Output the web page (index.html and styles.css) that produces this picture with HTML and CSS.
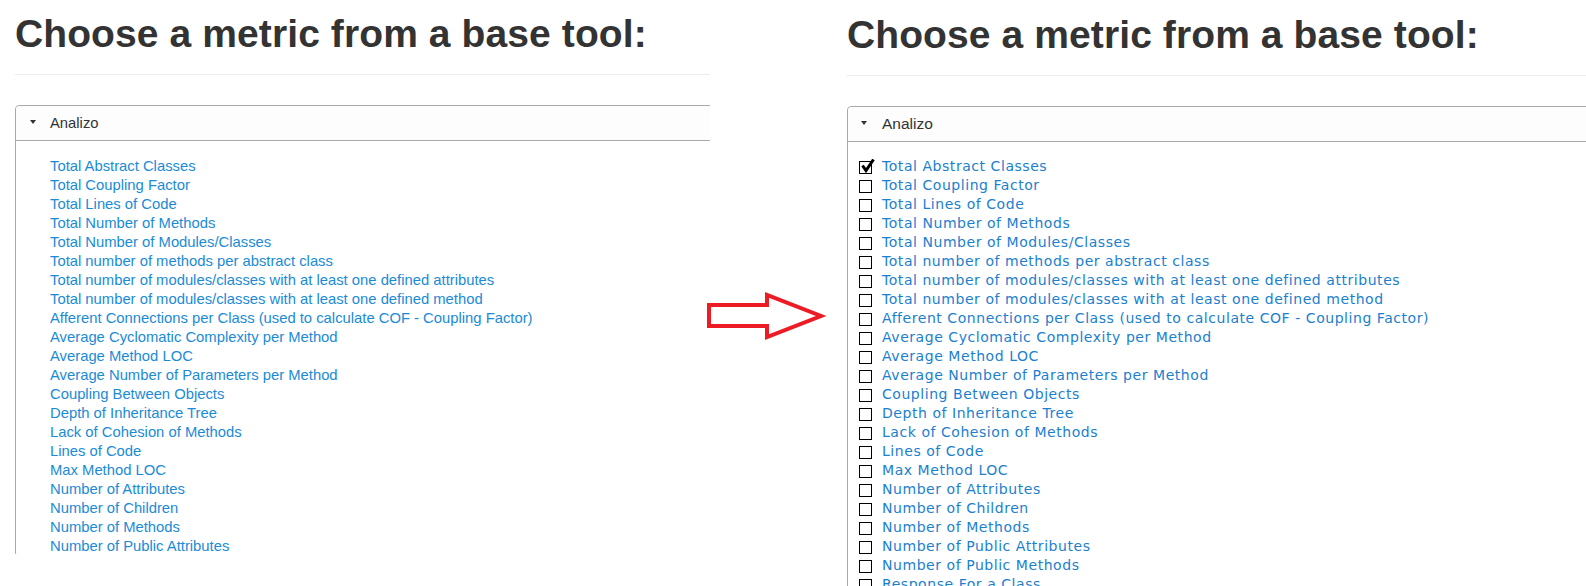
FILE: index.html
```html
<!DOCTYPE html>
<html>
<head>
<meta charset="utf-8">
<link rel="stylesheet" href="styles.css">
</head>
<body>
<div class="page">
  <section class="shot shot-left">
    <div class="page-header"><h1>Choose a metric from a base tool:</h1></div>
    <div class="panel">
      <div class="panel-heading"><span class="caret"></span><span>Analizo</span></div>
      <ul class="metrics">
        <li>Total Abstract Classes</li>
        <li>Total Coupling Factor</li>
        <li>Total Lines of Code</li>
        <li>Total Number of Methods</li>
        <li>Total Number of Modules/Classes</li>
        <li>Total number of methods per abstract class</li>
        <li>Total number of modules/classes with at least one defined attributes</li>
        <li>Total number of modules/classes with at least one defined method</li>
        <li>Afferent Connections per Class (used to calculate COF - Coupling Factor)</li>
        <li>Average Cyclomatic Complexity per Method</li>
        <li>Average Method LOC</li>
        <li>Average Number of Parameters per Method</li>
        <li>Coupling Between Objects</li>
        <li>Depth of Inheritance Tree</li>
        <li>Lack of Cohesion of Methods</li>
        <li>Lines of Code</li>
        <li>Max Method LOC</li>
        <li>Number of Attributes</li>
        <li>Number of Children</li>
        <li>Number of Methods</li>
        <li>Number of Public Attributes</li>
      </ul>
    </div>
  </section>
  <div class="arrow-col">
    <svg class="arrow" width="126" height="60" viewBox="0 0 126 60">
      <polygon points="3,19 61,19 61,9 115,30 61,51 61,40 3,40" fill="none" stroke="#ed1c24" stroke-width="4" stroke-linejoin="miter"/>
    </svg>
  </div>
  <section class="shot shot-right">
    <div class="page-header"><h1>Choose a metric from a base tool:</h1></div>
    <div class="panel">
      <div class="panel-heading"><span class="caret"></span><span>Analizo</span></div>
      <ul class="metrics">
        <li><span class="box checked"><svg width="15" height="15" viewBox="0 0 15 15"><path d="M2.5 6.5 L6 11.5 L13.5 0.5" fill="none" stroke="#000" stroke-width="3"/></svg></span>Total Abstract Classes</li>
        <li><span class="box"></span>Total Coupling Factor</li>
        <li><span class="box"></span>Total Lines of Code</li>
        <li><span class="box"></span>Total Number of Methods</li>
        <li><span class="box"></span>Total Number of Modules/Classes</li>
        <li><span class="box"></span>Total number of methods per abstract class</li>
        <li><span class="box"></span>Total number of modules/classes with at least one defined attributes</li>
        <li><span class="box"></span>Total number of modules/classes with at least one defined method</li>
        <li><span class="box"></span>Afferent Connections per Class (used to calculate COF - Coupling Factor)</li>
        <li><span class="box"></span>Average Cyclomatic Complexity per Method</li>
        <li><span class="box"></span>Average Method LOC</li>
        <li><span class="box"></span>Average Number of Parameters per Method</li>
        <li><span class="box"></span>Coupling Between Objects</li>
        <li><span class="box"></span>Depth of Inheritance Tree</li>
        <li><span class="box"></span>Lack of Cohesion of Methods</li>
        <li><span class="box"></span>Lines of Code</li>
        <li><span class="box"></span>Max Method LOC</li>
        <li><span class="box"></span>Number of Attributes</li>
        <li><span class="box"></span>Number of Children</li>
        <li><span class="box"></span>Number of Methods</li>
        <li><span class="box"></span>Number of Public Attributes</li>
        <li><span class="box"></span>Number of Public Methods</li>
        <li><span class="box"></span>Response For a Class</li>
      </ul>
    </div>
  </section>
</div>
</body>
</html>
```
FILE: styles.css
```css
html, body {
  margin: 0;
  padding: 0;
  background: #fff;
}
body {
  width: 1586px;
  height: 586px;
  overflow: hidden;
  font-family: "Liberation Sans", Arial, sans-serif;
  color: #333;
}
.page {
  display: flex;
  height: 586px;
}
.shot {
  overflow: hidden;
  box-sizing: border-box;
  padding-left: 15px;
  padding-top: 14px;
}
.shot-left {
  flex: 0 0 710px;
  height: 554px;
}
.shot-right {
  flex: 1 1 auto;
  height: 586px;
  padding-top: 15px;
}
.page-header {
  width: 1100px;
  border-bottom: 1px solid #eee;
  padding-bottom: 21px;
  margin-bottom: 30px;
}
h1 {
  margin: 0;
  font-size: 39px;
  line-height: 39px;
  font-weight: bold;
  letter-spacing: 0.1px;
  color: #333;
}
.panel {
  width: 1100px;
  border: 1px solid #a9a9a9;
  border-radius: 4px;
}
.panel-heading {
  height: 34px;
  display: flex;
  align-items: center;
  padding-left: 14px;
  font-size: 14.8px;
  background: #fdfdfd;
  border-bottom: 1px solid #a9a9a9;
  border-radius: 4px 4px 0 0;
}
.caret {
  width: 0;
  height: 0;
  border-left: 3.5px solid transparent;
  border-right: 3.5px solid transparent;
  border-top: 4px solid #333;
  margin-right: 14px;
  margin-top: -2px;
}
.metrics {
  list-style: none;
  margin: 0;
  padding: 16px 0 0 34px;
  font-size: 14.8px;
  line-height: 19px;
  color: #1a8bd8;
}
.metrics li {
  white-space: nowrap;
  height: 19px;
}
.shot-right .panel-heading {
  padding-left: 13px;
  font-size: 15.5px;
}
.shot-right .caret {
  margin-right: 15px;
}
.shot-right .metrics {
  padding-top: 15px;
  padding-left: 11px;
  font-family: "DejaVu Sans", Verdana, sans-serif;
  font-size: 14px;
  letter-spacing: 0.55px;
  color: #1b80d0;
}
.shot-right .metrics li {
  display: flex;
  align-items: center;
}
.box {
  position: relative;
  box-sizing: border-box;
  width: 13px;
  height: 13px;
  border: 1px solid #000;
  background: #fff;
  margin-right: 10px;
  flex: 0 0 13px;
  margin-top: 1px;
}
.box svg {
  position: absolute;
  left: 0px;
  top: -3px;
}
.arrow-col {
  flex: 0 0 122px;
}
.arrow {
  display: block;
  margin-top: 286px;
  margin-left: -4px;
}
```
